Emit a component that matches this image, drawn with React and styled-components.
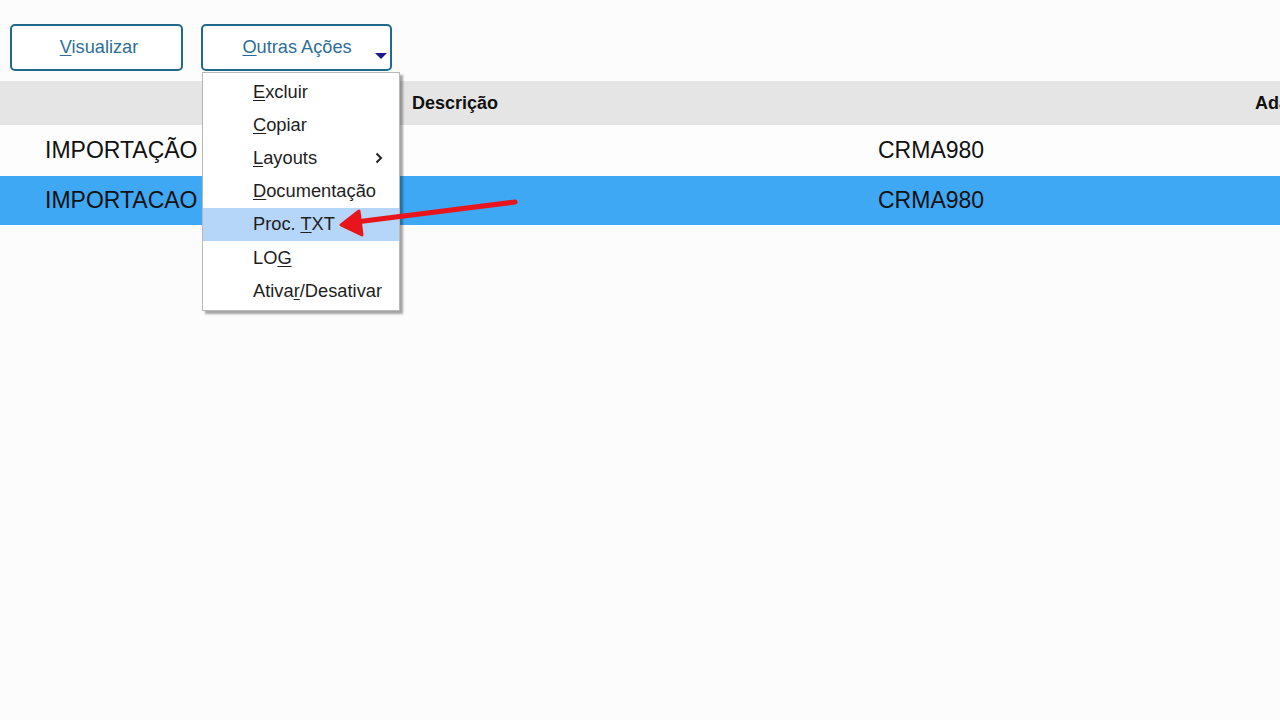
import styled, { createGlobalStyle } from 'styled-components';

const GlobalStyle = createGlobalStyle`
    html, body {
        margin: 0;
        padding: 0;
        background: #fcfcfc;
        font-family: "Liberation Sans", Arial, sans-serif;
    }
`;

const Page = styled.div`
    position: relative;
    width: 1280px;
    height: 720px;
    overflow: hidden;
    background: #fcfcfc;
`;

const Toolbar = styled.div`
    display: flex;
    gap: 18px;
    padding: 24px 0 0 10px;
    height: 47px;
`;

const ActionButton = styled.button`
    position: relative;
    width: ${(p) => p.$width}px;
    height: 47px;
    box-sizing: border-box;
    border: 2px solid #1f6a8a;
    border-radius: 5px;
    background: #ffffff;
    color: #2d6e98;
    font-family: "Liberation Sans", Arial, sans-serif;
    font-size: 18.2px;
    padding: 0 0 0 ${(p) => p.$shift || 0}px;
    cursor: pointer;
`;

const Key = styled.span`
    text-decoration: underline;
    text-underline-offset: 2px;
`;

const Caret = styled.span`
    position: absolute;
    right: 3px;
    bottom: 10px;
    width: 0;
    height: 0;
    border-left: 6px solid transparent;
    border-right: 6px solid transparent;
    border-top: 6px solid #1c1a8e;
`;

const Table = styled.div`
    margin-top: 10px;
`;

const Row = styled.div`
    display: grid;
    grid-template-columns: 412px 466px 377px 1fr;
    align-items: center;
    height: ${(p) => p.$height}px;
    background: ${(p) => p.$bg};
`;

const Cell = styled.div`
    white-space: nowrap;
    overflow: hidden;
    padding-left: ${(p) => p.$pad || 0}px;
    font-size: ${(p) => (p.$head ? 18 : 23)}px;
    font-weight: ${(p) => (p.$head ? 700 : 400)};
    color: #111;
`;

const Menu = styled.div`
    position: absolute;
    left: 202px;
    top: 72px;
    width: 198px;
    box-sizing: border-box;
    padding: 2px 0 3px;
    background: #ffffff;
    border: 1px solid #b8b8b8;
    box-shadow: 3px 3px 2px rgba(0, 0, 0, 0.35);
`;

const MenuItem = styled.div`
    position: relative;
    display: flex;
    align-items: center;
    height: 33.2px;
    padding-left: 50px;
    font-size: 18.3px;
    color: #1e1e1e;
    background: ${(p) => (p.$active ? '#b5d6f8' : 'transparent')};
`;

const Sub = styled.svg`
    position: absolute;
    right: 16px;
    top: 11px;
`;

const Arrow = styled.svg`
    position: absolute;
    left: 0;
    top: 0;
    pointer-events: none;
`;

const menuItems = [
    { pre: '', key: 'E', post: 'xcluir' },
    { pre: '', key: 'C', post: 'opiar' },
    { pre: '', key: 'L', post: 'ayouts', sub: true },
    { pre: '', key: 'D', post: 'ocumentação' },
    { pre: 'Proc. ', key: 'T', post: 'XT', active: true },
    { pre: 'LO', key: 'G', post: '' },
    { pre: 'Ativa', key: 'r', post: '/Desativar' },
];

const rows = [
    { name: 'IMPORTAÇÃO', code: 'CRMA980', bg: '#fdfdfd', height: 51 },
    { name: 'IMPORTACAO', code: 'CRMA980', bg: '#3ea8f5', height: 49 },
];

const App = () => {
    return (
        <Page>
            <GlobalStyle />
            <Toolbar>
                <ActionButton $width={173} $shift={5}>
                    <Key>V</Key>isualizar
                </ActionButton>
                <ActionButton $width={191} $shift={1}>
                    <Key>O</Key>utras Ações
                    <Caret />
                </ActionButton>
            </Toolbar>

            <Table>
                <Row $height={44} $bg="#e5e5e5">
                    <Cell $head />
                    <Cell $head>Descrição</Cell>
                    <Cell $head />
                    <Cell $head>Adapter</Cell>
                </Row>
                {rows.map((r) => (
                    <Row key={r.name} $height={r.height} $bg={r.bg}>
                        <Cell $pad={45}>{r.name}</Cell>
                        <Cell />
                        <Cell>{r.code}</Cell>
                        <Cell />
                    </Row>
                ))}
            </Table>

            <Menu>
                {menuItems.map((m) => (
                    <MenuItem key={m.post + m.key} $active={m.active}>
                        <span>{m.pre}<Key>{m.key}</Key>{m.post}</span>
                        {m.sub && (
                            <Sub width="8" height="12" viewBox="0 0 8 12">
                                <polyline points="1.5,1.5 6,6 1.5,10.5" fill="none" stroke="#222" strokeWidth="2" />
                            </Sub>
                        )}
                    </MenuItem>
                ))}
            </Menu>

            <Arrow width="1280" height="720" viewBox="0 0 1280 720">
                <line x1="515" y1="202" x2="356" y2="222" stroke="#e8161c" strokeWidth="5" strokeLinecap="round" />
                <polygon points="341,225 359,211 362,235" fill="#e8161c" stroke="#e8161c" strokeWidth="3" strokeLinejoin="round" />
            </Arrow>
        </Page>
    );
};

export default App;
